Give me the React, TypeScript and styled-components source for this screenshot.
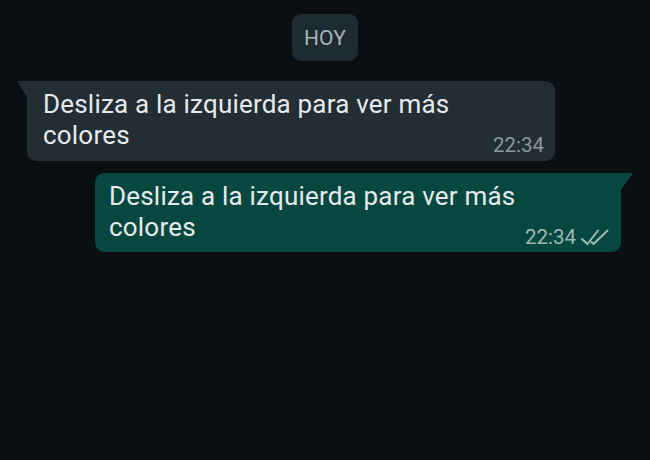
import React from "react";
import styled, { createGlobalStyle } from "styled-components";

const Global = createGlobalStyle`
  html, body { margin: 0; padding: 0; background: #0c0f12; }
  body { font-family: Roboto, "Noto Sans", sans-serif; }
`;

const Screen = styled.div`
  width: 650px;
  height: 460px;
  background: #0c0f12;
  display: flex;
  flex-direction: column;
  padding-top: 14px;
  box-sizing: border-box;
`;

const DateRow = styled.div`
  display: flex;
  justify-content: center;
  margin-bottom: 20px;
`;

const DatePill = styled.div`
  height: 47px;
  padding: 0 12px;
  display: flex;
  align-items: center;
  background: #1f2b32;
  border-radius: 9px;
  color: #a8b3b9;
  font-size: 21px;
  letter-spacing: 0.2px;
`;

const Row = styled.div<{ $out?: boolean }>`
  display: flex;
  justify-content: ${(p) => (p.$out ? "flex-end" : "flex-start")};
  padding: ${(p) => (p.$out ? "0 29px 0 0" : "0 0 0 27px")};
  margin-bottom: 12px;
`;

const Bubble = styled.div<{ $out?: boolean }>`
  position: relative;
  width: ${(p) => (p.$out ? "526px" : "528px")};
  box-sizing: border-box;
  background: ${(p) => (p.$out ? "#06483f" : "#222d34")};
  border-radius: ${(p) => (p.$out ? "9px 0 9px 9px" : "0 9px 9px 9px")};
  padding: ${(p) => (p.$out ? "8px 12px 5px 14px" : "8px 11px 6px 16px")};
`;

const Tail = styled.svg<{ $out?: boolean }>`
  position: absolute;
  top: 0;
  ${(p) => (p.$out ? "right: -12px;" : "left: -10px;")}
  width: ${(p) => (p.$out ? "13px" : "11px")};
  height: 19px;
`;

const Text = styled.div`
  color: #e6eaec;
  font-size: 26px;
  line-height: 31px;
  letter-spacing: 0.2px;
  padding-right: 40px;
`;

const Meta = styled.div<{ $out?: boolean }>`
  display: flex;
  justify-content: flex-end;
  align-items: center;
  gap: 5px;
  margin-top: -16px;
  height: 20px;
  color: ${(p) => (p.$out ? "#9fb8b2" : "#8c989f")};
  font-size: 20.5px;
  line-height: 20px;
`;

const Checks = () => (
  <svg width="28" height="17" viewBox="0 0 28 17" fill="none" stroke="#a3bbb5" strokeWidth="1.9" strokeLinecap="round" strokeLinejoin="round">
    <path d="M1 10 L6.5 15 L17 1.5" />
    <path d="M10.5 13 L12.5 15 L26.5 1.5" />
  </svg>
);

export default function App() {
  return (
    <>
      <Global />
      <Screen>
        <DateRow>
          <DatePill>HOY</DatePill>
        </DateRow>
        <Row>
          <Bubble>
            <Tail viewBox="0 0 11 19">
              <path d="M11 0 H1.5 Q0 0 0.8 1.3 L11 18 Z" fill="#222d34" />
            </Tail>
            <Text>Desliza a la izquierda para ver más colores</Text>
            <Meta>22:34</Meta>
          </Bubble>
        </Row>
        <Row $out>
          <Bubble $out>
            <Tail $out viewBox="0 0 13 19">
              <path d="M0 0 H11.5 Q13 0 12.2 1.3 L0 18 Z" fill="#06483f" />
            </Tail>
            <Text>Desliza a la izquierda para ver más colores</Text>
            <Meta $out>
              22:34
              <Checks />
            </Meta>
          </Bubble>
        </Row>
      </Screen>
    </>
  );
}
